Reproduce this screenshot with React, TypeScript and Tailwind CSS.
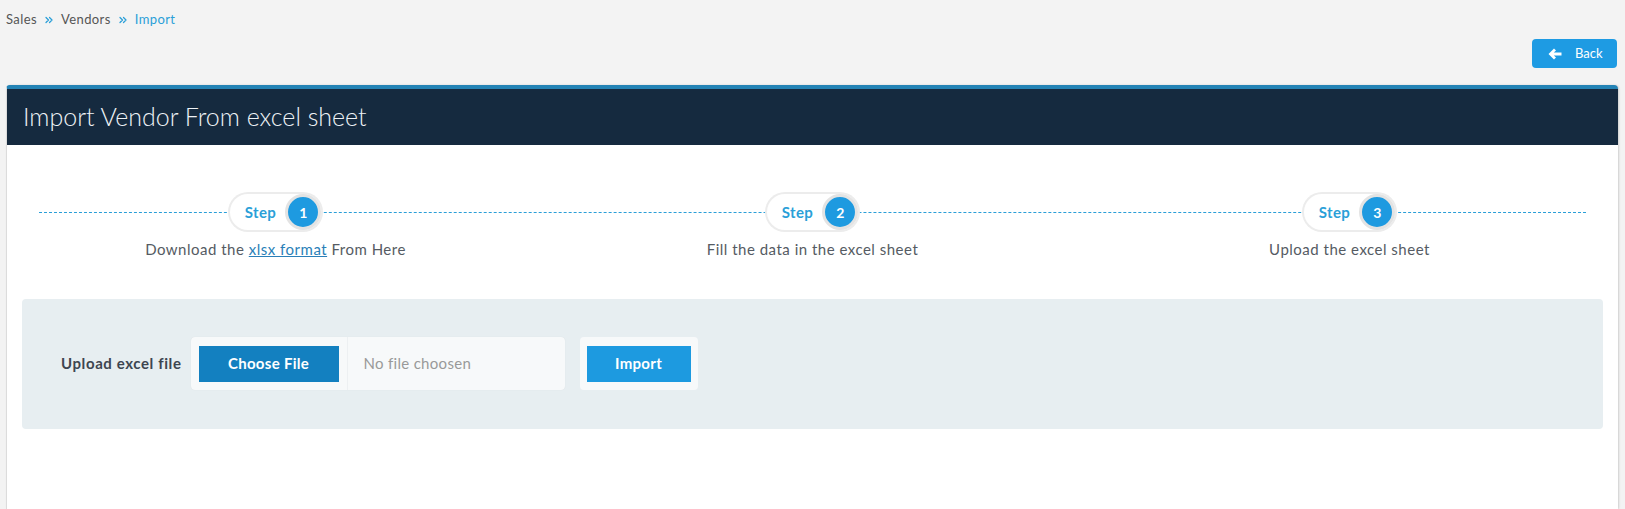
import { ChevronsRight } from "lucide-react";

const steps = [
    { n: 1, text: "download" },
    { n: 2, text: "Fill the data in the excel sheet" },
    { n: 3, text: "Upload the excel sheet" },
];

const StepBadge = ({ n }: { n: number }) => (
    <div className="relative z-10 flex h-[36px] items-center rounded-full bg-white pl-[15px] shadow-[0_0_0_2px_#ececec]">
        <span className="pr-[9px] text-[15px] font-bold tracking-[0.4px] text-[#2a9fd8]">Step</span>
        <span className="flex h-[36px] w-[36px] items-center justify-center rounded-full border-[3px] border-[#e3e3e3] bg-[#1e9ae0] text-[14px] font-bold text-white">
            {n}
        </span>
    </div>
);

export default function App() {
    return (
        <div className="min-h-[509px] bg-[#f3f3f3] font-['Lato','Open_Sans',sans-serif] text-[#555]">
            {/* breadcrumb */}
            <div className="flex h-[40px] items-center pl-[6px] text-[13px] tracking-[0.4px]">
                <span className="text-[#555]">Sales</span>
                <ChevronsRight className="mx-[6px] h-[12px] w-[12px] text-[#2a9fd8]" strokeWidth={2.5} />
                <span className="text-[#555]">Vendors</span>
                <ChevronsRight className="mx-[6px] h-[12px] w-[12px] text-[#2a9fd8]" strokeWidth={2.5} />
                <span className="text-[#2a9fd8]">Import</span>
            </div>

            <div className="-mt-[1px] flex justify-end pr-[8px]">
                <button className="flex h-[29px] w-[85px] items-center gap-[13px] rounded-[4px] bg-[#1e9be3] pl-[16px] text-[13px] text-white">
                    <svg width="14" height="12" viewBox="0 0 14 12">
                        <path d="M6 0.5 L0.5 6 L6 11.5 L8 9.5 L5.8 7.5 H13.5 V4.5 H5.8 L8 2.5 Z" fill="white" strokeLinejoin="round" />
                    </svg>
                    Back
                </button>
            </div>

            {/* card */}
            <div className="ml-[6px] mr-[7px] mt-[17px] min-h-[424px] rounded-t-[4px] border-t-[4px] border-l border-t-[#2383b5] border-l-[#dcdcdc] bg-white shadow-[1px_0_2px_rgba(0,0,0,0.15)]">
                <div className="flex h-[56px] items-center bg-[#152a3f] pl-[16px]">
                    <h1 className="font-['Lato',sans-serif] text-[25px] font-light text-[#eef2f6]">
                        Import Vendor From excel sheet
                    </h1>
                </div>

                {/* steps */}
                <div className="relative pt-[49px]">
                    <div className="absolute left-[32px] right-[32px] top-[67px] border-t border-dashed border-[#2a9fd8]" />
                    <div className="grid grid-cols-3">
                        {steps.map((s) => (
                            <div key={s.n} className="flex flex-col items-center">
                                <StepBadge n={s.n} />
                                <p className="mt-[8px] text-[15px] tracking-[0.5px] text-[#555b63]">
                                    {s.n === 1 ? (
                                        <>
                                            Download the{" "}
                                            <a className="text-[#2a7fb8] underline">xlsx format</a> From Here
                                        </>
                                    ) : (
                                        s.text
                                    )}
                                </p>
                            </div>
                        ))}
                    </div>
                </div>

                {/* upload panel */}
                <div className="mx-[15px] mt-[38px] flex h-[130px] items-center rounded-[4px] bg-[#e7eef1] pl-[39px]">
                    <label className="mr-[9px] text-[15px] font-bold tracking-[0.6px] text-[#3d4550]">Upload excel file</label>
                    <div className="flex h-[53px] items-center rounded-[4px] bg-[#f7f9fa] shadow-[0_0_1px_rgba(0,0,0,0.1)]">
                        <div className="flex h-full items-center pl-[8px] pr-[8px]">
                            <button className="h-[36px] w-[140px] bg-[#1380c0] text-[15px] font-bold tracking-[0.3px] text-white">
                                Choose File
                            </button>
                        </div>
                        <div className="flex h-full w-[218px] items-center border-l border-[#edf0f2] pl-[16px] text-[15px] tracking-[0.3px] text-[#999]">
                            No file choosen
                        </div>
                    </div>
                    <div className="ml-[15px] flex h-[53px] items-center rounded-[4px] bg-[#f7f9fa] px-[7px]">
                        <button className="h-[36px] w-[104px] bg-[#1d9ae0] text-[15px] font-bold tracking-[0.3px] text-white">
                            Import
                        </button>
                    </div>
                </div>
            </div>
        </div>
    );
}
